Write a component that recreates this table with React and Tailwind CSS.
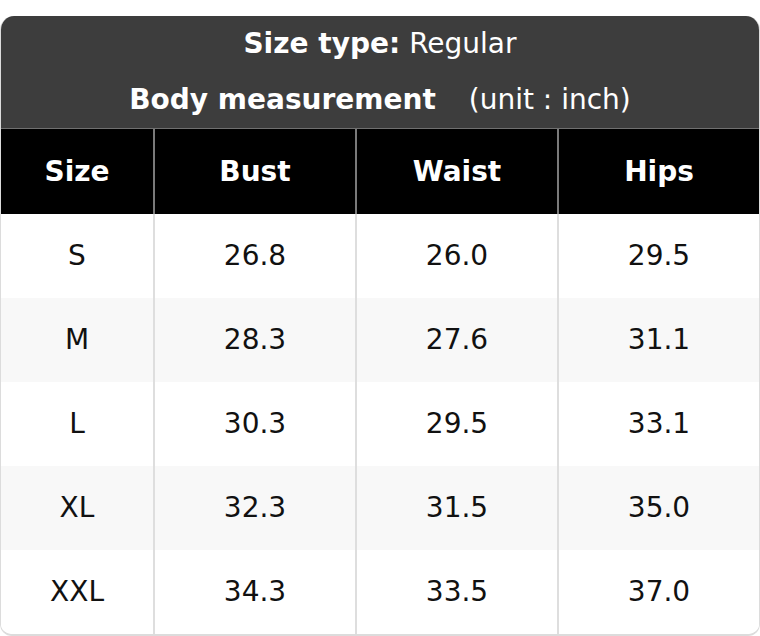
import React from 'react';

const ROWS = [
  ['S', '26.8', '26.0', '29.5'],
  ['M', '28.3', '27.6', '31.1'],
  ['L', '30.3', '29.5', '33.1'],
  ['XL', '32.3', '31.5', '35.0'],
  ['XXL', '34.3', '33.5', '37.0'],
];

const COLS = ['Size', 'Bust', 'Waist', 'Hips'];

const colClass = (i) =>
  i === 0 ? 'w-[152px] shrink-0' : 'flex-1';

const App = () => {
  return (
    <div
      className="bg-white pt-4 text-[28px]"
      style={{ fontFamily: '"DejaVu Sans", Verdana, sans-serif' }}
    >
      <div className="rounded-t-[14px] rounded-b-[12px] overflow-hidden border-b-2 border-x border-[#dcdcdc]">
        <div className="bg-[#3d3d3d] text-white text-center border-b border-[#707070]">
          <div className="h-[56px] flex items-center justify-center">
            <span className="font-bold">Size type:</span>
            <span className="ml-[9px]">Regular</span>
          </div>
          <div className="h-[56px] flex items-center justify-center">
            <span className="font-bold">Body measurement</span>
            <span className="ml-[33px]">(unit : inch)</span>
          </div>
        </div>

        <div className="flex bg-black text-white font-bold h-[85px]">
          {COLS.map((c, i) => (
            <div
              key={c}
              className={`${colClass(i)} flex items-center justify-center ${i > 0 ? 'border-l-2 border-[#7a7a7a]' : ''}`}
            >
              {c}
            </div>
          ))}
        </div>

        {ROWS.map((row, r) => (
          <div
            key={row[0]}
            className={`flex h-[84px] text-[#111] ${r % 2 === 1 ? 'bg-[#f8f8f8]' : 'bg-white'}`}
          >
            {row.map((v, i) => (
              <div
                key={i}
                className={`${colClass(i)} flex items-center justify-center ${i > 0 ? 'border-l-2 border-[#dedede]' : ''}`}
              >
                {v}
              </div>
            ))}
          </div>
        ))}
      </div>
    </div>
  );
};

export default App;
